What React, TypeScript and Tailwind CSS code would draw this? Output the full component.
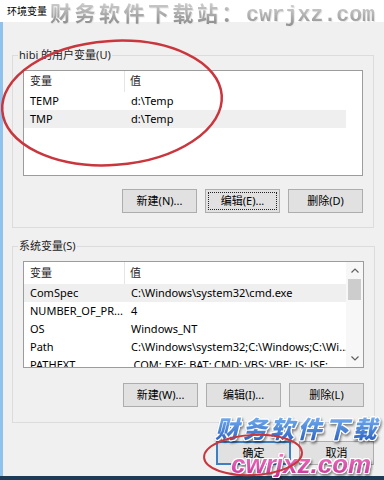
import React from "react";

const ui = "font-['Segoe_UI','Noto_Sans','Noto_Sans_CJK_SC',sans-serif]";

type Row = { name: string; value: string; hot?: boolean };

const userVars: Row[] = [
  { name: "TEMP", value: "d:\\Temp" },
  { name: "TMP", value: "d:\\Temp", hot: true },
];

const sysVars: Row[] = [
  { name: "ComSpec", value: "C:\\Windows\\system32\\cmd.exe", hot: true },
  { name: "NUMBER_OF_PR...", value: "4" },
  { name: "OS", value: "Windows_NT" },
  { name: "Path", value: "C:\\Windows\\system32;C:\\Windows;C:\\Wi..." },
  { name: "PATHEXT", value: ".COM;.EXE;.BAT;.CMD;.VBS;.VBE;.JS;.JSE;..." },
];

function Chevron({ up }: { up?: boolean }) {
  return (
    <svg width="8" height="5" viewBox="0 0 8 5" className="block">
      <path
        d={up ? "M0.5 4.5 L4 1 L7.5 4.5" : "M0.5 0.5 L4 4 L7.5 0.5"}
        fill="none"
        stroke="#606060"
        strokeWidth="1.2"
      />
    </svg>
  );
}

function ListView({
  rows,
  height,
  header,
  scroll,
}: {
  rows: Row[];
  height: string;
  header: string;
  scroll?: boolean;
}) {
  return (
    <div className={`flex overflow-hidden border border-[#9c9c9c] bg-white ${height}`}>
      <div className="w-[322px] shrink-0">
        <div className={`flex items-center text-[#1e1e1e] ${header}`}>
          <div className="flex h-full w-[101px] items-center border-r border-[#e5e5e5] pl-[6px]">
            变量
          </div>
          <div className="pl-[5px]">值</div>
        </div>
        {rows.map((r) => (
          <div
            key={r.name}
            className={`flex h-[18px] items-center whitespace-nowrap text-black ${r.hot ? "bg-[#efefef]" : ""}`}
          >
            <div className="w-[101px] shrink-0 pl-[6px]">{r.name}</div>
            <div className="pl-[6px]">{r.value}</div>
          </div>
        ))}
      </div>
      {scroll && (
        <div className="flex w-[17px] flex-col items-center bg-[#f7f7f7]">
          <div className="flex h-[17px] items-center justify-center">
            <Chevron up />
          </div>
          <div className="h-[21px] w-[13px] bg-[#cdcdcd]" />
          <div className="flex-1" />
          <div className="flex h-[17px] items-center justify-center">
            <Chevron />
          </div>
        </div>
      )}
    </div>
  );
}

function Btn({
  label,
  focus,
  primary,
}: {
  label: string;
  focus?: boolean;
  primary?: boolean;
}) {
  return (
    <button
      className={`flex h-[24px] w-[75px] items-center justify-center bg-[#e1e1e1] text-black ${
        primary ? "border-2 border-[#3d7fc0]" : "border border-[#adadad]"
      } ${focus ? "outline-1 outline-offset-[-4px] outline-dotted outline-[#222]" : ""}`}
    >
      {label}
    </button>
  );
}

function Group({
  title,
  rows,
  buttons,
  listHeight,
  header,
  btnGap,
  scroll,
  className,
}: {
  title: string;
  rows: Row[];
  buttons: { label: string; focus?: boolean }[];
  listHeight: string;
  header: string;
  btnGap: string;
  scroll?: boolean;
  className: string;
}) {
  return (
    <fieldset className={`w-[362px] border border-[#dcdcdc] ${className}`}>
      <legend className="ml-[5px] px-[1px] leading-[16px] text-[#1e1e1e]">{title}</legend>
      <div className="px-[10px] pt-[7px]">
        <ListView rows={rows} height={listHeight} header={header} scroll={scroll} />
        <div className={`flex justify-end gap-[8px] ${btnGap}`}>
          {buttons.map((b) => (
            <Btn key={b.label} label={b.label} focus={b.focus} />
          ))}
        </div>
      </div>
    </fieldset>
  );
}

export default function App() {
  return (
    <div className={`relative flex h-[480px] w-[384px] flex-col overflow-hidden bg-[#f0f0f0] text-[11px] ${ui}`}>
      {/* title bar */}
      <div className="flex h-[22px] shrink-0 items-center bg-white pl-[7px] text-[10px] text-black">
        环境变量
      </div>

      <div className="flex flex-1 flex-col border-l-[3px] border-[#8fc2ec] pl-[9px]">
        <Group
          title="hibi 的用户变量(U)"
          rows={userVars}
          listHeight="h-[106px]"
          header="h-[21px]"
          btnGap="pt-[13px]"
          className="mt-[25px] pb-[14px]"
          buttons={[
            { label: "新建(N)..." },
            { label: "编辑(E)...", focus: true },
            { label: "删除(D)" },
          ]}
        />
        <Group
          title="系统变量(S)"
          rows={sysVars}
          listHeight="h-[107px]"
          header="h-[22px]"
          btnGap="pt-[15px]"
          scroll
          className="mt-[10px] pb-[15px]"
          buttons={[
            { label: "新建(W)..." },
            { label: "编辑(I)..." },
            { label: "删除(L)" },
          ]}
        />
        <div className="mt-[18px] flex w-[362px] justify-end gap-[8px]">
          <Btn label="确定" primary />
          <Btn label="取消" />
        </div>
      </div>
      <div className="h-[4px] shrink-0 bg-[#1d3a57]" />

      {/* top watermark */}
      <div className="pointer-events-none absolute left-[50px] top-0 flex items-baseline leading-[24px] [filter:drop-shadow(1px_1px_0_#e8e8e8)]">
        <span className="bg-linear-to-b from-[#d6d6d6] to-[#8e8e8e] bg-clip-text text-[21px] font-bold tracking-[3.5px] text-transparent font-['Noto_Sans_CJK_SC',sans-serif]">
          财务软件下载站：
        </span>
        <span className="bg-linear-to-b from-[#d6d6d6] to-[#8e8e8e] bg-clip-text text-[21.5px] font-bold text-transparent font-['Liberation_Mono',monospace]">
          cwrjxz.com
        </span>
      </div>

      {/* bottom watermark */}
      <div className="pointer-events-none absolute left-[215px] top-[414px] whitespace-nowrap bg-linear-to-b from-[#7cb6f4] to-[#2a5fc0] bg-clip-text text-[24px] font-black leading-[28px] tracking-[3.5px] text-transparent italic font-['Noto_Sans_CJK_SC',sans-serif] [filter:drop-shadow(1px_0_0_#fff)_drop-shadow(-1px_0_0_#fff)_drop-shadow(0_1px_0_#fff)_drop-shadow(0_-1px_0_#fff)_drop-shadow(1px_2px_1px_rgba(0,0,0,0.45))]">
        财务软件下载
      </div>
      <div className="pointer-events-none absolute left-[231px] top-[451px] whitespace-nowrap bg-linear-to-b from-[#f47cc8] to-[#c72f98] bg-clip-text text-[26px] font-bold italic leading-[26px] text-transparent font-['Liberation_Sans',sans-serif] [filter:drop-shadow(1px_0_0_#fff)_drop-shadow(-1px_0_0_#fff)_drop-shadow(0_1px_0_#fff)_drop-shadow(0_-1px_0_#fff)_drop-shadow(1px_2px_1px_rgba(0,0,0,0.45))]">
        cwrjxz.com
      </div>

      {/* red marker circles */}
      <svg className="pointer-events-none absolute left-0 top-0" width="384" height="480" viewBox="0 0 384 480">
        <ellipse cx="112" cy="103" rx="110" ry="62" transform="rotate(-4 112 103)" fill="none" stroke="#c9363d" strokeWidth="2.5" />
        <ellipse cx="253" cy="455" rx="49" ry="20" transform="rotate(-3 253 455)" fill="none" stroke="#c9363d" strokeWidth="2" />
      </svg>
    </div>
  );
}
